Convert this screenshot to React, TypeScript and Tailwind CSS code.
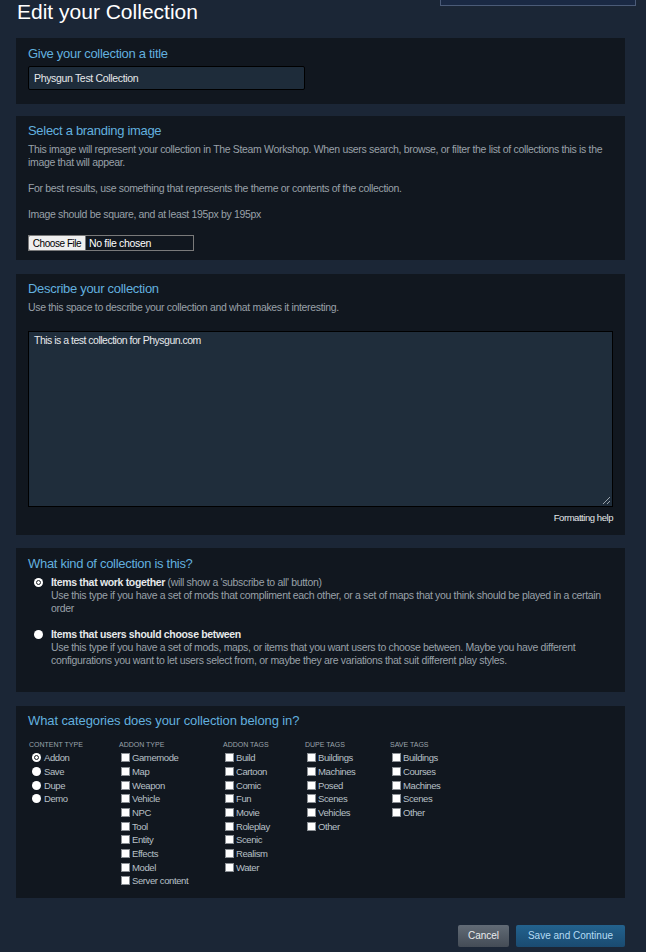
import React from "react";

const FONT = "font-['Liberation_Sans',Arial,sans-serif]";
const BODY = "text-[10.5px] leading-[13px] tracking-[-0.33px]";

function Panel({ className, children }: { className: string; children: React.ReactNode }) {
  return <div className={"bg-[#11171f] px-[12px] " + className}>{children}</div>;
}

function Title({ children }: { children: React.ReactNode }) {
  return <div className="text-[13px] leading-[17px] tracking-[-0.3px] text-[#62b0df]">{children}</div>;
}

function Checkbox() {
  return <span className="block w-[9px] h-[9px] bg-white border border-[#8a8f94] shrink-0" />;
}

function Radio({ checked }: { checked?: boolean }) {
  return (
    <span className="flex items-center justify-center w-[9px] h-[9px] rounded-full bg-white shrink-0">
      {checked ? <span className="block w-[5px] h-[5px] rounded-full border-[1.5px] border-[#1b1f24] bg-white" /> : null}
    </span>
  );
}

function CheckColumn({ title, items, width }: { title: string; items: string[]; width: string }) {
  return (
    <div className={width}>
      <div className="text-[7px] leading-[9px] text-[#9aa3ab]">{title}</div>
      <div className="mt-[2px] flex flex-col">
        {items.map((it, i) => (
          <div key={i} className="h-[13.67px] flex items-center pl-[2px] gap-[2px]">
            <Checkbox />
            <span className="text-[9.5px] leading-[13px] tracking-[-0.4px] text-[#b8c0c7]">{it}</span>
          </div>
        ))}
      </div>
    </div>
  );
}

export default function App() {
  return (
    <div className={"min-h-[952px] w-full bg-[#1b2636] " + FONT}>
      <div className="flex items-start justify-between pl-[17px] pr-[10px]">
        <h1 className="text-[21px] leading-[24px] text-white">Edit your Collection</h1>
        <div className="w-[196px] h-[6px] border-x border-b border-[#4b5b78] bg-[#1a2944]" />
      </div>

      <div className="ml-[16px] w-[609px] mt-[14px] flex flex-col">
        {/* Title */}
        <Panel className="pt-[7px] pb-[14px]">
          <Title>Give your collection a title</Title>
          <div className={"mt-[4px] w-[277px] h-[24px] bg-[#1e2c3a] border border-black rounded-[2px] flex items-center pl-[5px] text-[#e6e9eb] " + BODY}>
            Physgun Test Collection
          </div>
        </Panel>

        {/* Branding */}
        <Panel className="mt-[12px] pt-[6px] pb-[9px]">
          <Title>Select a branding image</Title>
          <div className={"mt-[4px] text-[#99a1a9] " + BODY}>
            This image will represent your collection in The Steam Workshop. When users search, browse, or filter the list of collections this is the image that will appear.
            <br />
            <br />
            For best results, use something that represents the theme or contents of the collection.
            <br />
            <br />
            Image should be square, and at least 195px by 195px
          </div>
          <div className="mt-[14px] w-[166px] h-[16px] border border-[#7a7a7a] flex items-center bg-[#11171f]">
            <span className="h-full w-[57px] justify-center bg-[#efefef] text-black flex items-center border-r border-[#7a7a7a] rounded-[1px] text-[10px] leading-[13px] tracking-[-0.45px]">Choose File</span>
            <span className={"pl-[3px] text-white " + BODY}>No file chosen</span>
          </div>
        </Panel>

        {/* Describe */}
        <Panel className="mt-[14px] pt-[6px] pb-[11px]">
          <Title>Describe your collection</Title>
          <div className={"mt-[4px] text-[#99a1a9] " + BODY}>
            Use this space to describe your collection and what makes it interesting.
          </div>
          <div className="relative mt-[17px] h-[176px] bg-[#1f2d3b] border border-black pl-[5px] pt-[2px] text-[#e6e9eb] text-[10.5px] leading-[13px] tracking-[-0.5px]">
            This is a test collection for Physgun.com
            <svg className="absolute right-[1px] bottom-[1px]" width="9" height="9" viewBox="0 0 9 9">
              <line x1="8" y1="1" x2="1" y2="8" stroke="#9aa3ab" strokeWidth="1" />
              <line x1="8" y1="5" x2="5" y2="8" stroke="#9aa3ab" strokeWidth="1" />
            </svg>
          </div>
          <div className="mt-[4px] text-right text-[9.5px] leading-[13px] tracking-[-0.45px] text-[#e3e6e8]">Formatting help</div>
        </Panel>

        {/* Kind */}
        <Panel className="mt-[13px] pt-[7px] pb-[25px]">
          <Title>What kind of collection is this?</Title>
          <div className="mt-[4px] flex">
            <div className="w-[23px] h-[13px] flex items-center pl-[6px]">
              <Radio checked />
            </div>
            <div className={"flex-1 text-[#99a1a9] " + BODY}>
              <div>
                <span className="font-bold text-[#e6e9eb]">Items that work together</span> (will show a &apos;subscribe to all&apos; button)
              </div>
              <div>Use this type if you have a set of mods that compliment each other, or a set of maps that you think should be played in a certain order</div>
            </div>
          </div>
          <div className="mt-[13px] flex">
            <div className="w-[23px] h-[13px] flex items-center pl-[6px]">
              <Radio />
            </div>
            <div className={"flex-1 text-[#99a1a9] " + BODY}>
              <div>
                <span className="font-bold text-[#e6e9eb]">Items that users should choose between</span>
              </div>
              <div>Use this type if you have a set of mods, maps, or items that you want users to choose between. Maybe you have different configurations you want to let users select from, or maybe they are variations that suit different play styles.</div>
            </div>
          </div>
        </Panel>

        {/* Categories */}
        <Panel className="mt-[14px] pt-[6px] pb-[10px]">
          <div className="text-[13px] leading-[17px] tracking-[-0.1px] text-[#62b0df]">What categories does your collection belong in?</div>
          <div className="mt-[11px] flex pl-[1px]">
            <div className="w-[90px]">
              <div className="text-[7px] leading-[9px] text-[#9aa3ab]">CONTENT TYPE</div>
              <div className="mt-[2px] flex flex-col">
                {["Addon", "Save", "Dupe", "Demo"].map((it, i) => (
                  <div key={i} className="h-[13.67px] flex items-center pl-[3px] gap-[3px]">
                    <Radio checked={i === 0} />
                    <span className="text-[9.5px] leading-[13px] tracking-[-0.4px] text-[#b8c0c7]">{it}</span>
                  </div>
                ))}
              </div>
            </div>
            <CheckColumn
              width="w-[104px]"
              title="ADDON TYPE"
              items={["Gamemode", "Map", "Weapon", "Vehicle", "NPC", "Tool", "Entity", "Effects", "Model", "Server content"]}
            />
            <CheckColumn
              width="w-[82px]"
              title="ADDON TAGS"
              items={["Build", "Cartoon", "Comic", "Fun", "Movie", "Roleplay", "Scenic", "Realism", "Water"]}
            />
            <CheckColumn
              width="w-[85px]"
              title="DUPE TAGS"
              items={["Buildings", "Machines", "Posed", "Scenes", "Vehicles", "Other"]}
            />
            <CheckColumn
              width="w-[85px]"
              title="SAVE TAGS"
              items={["Buildings", "Courses", "Machines", "Scenes", "Other"]}
            />
          </div>
        </Panel>
      </div>

      <div className="mt-[27px] flex justify-end gap-[7px] pr-[21px]">
        <button className="w-[51px] h-[22px] rounded-[2px] bg-gradient-to-b from-[#626b76] to-[#444c56] text-[10px] text-[#e9ecee]">Cancel</button>
        <button className="w-[109px] h-[22px] rounded-[2px] bg-gradient-to-b from-[#23628e] to-[#1a4b71] text-[10px] text-[#b4dcf5]">Save and Continue</button>
      </div>
    </div>
  );
}
